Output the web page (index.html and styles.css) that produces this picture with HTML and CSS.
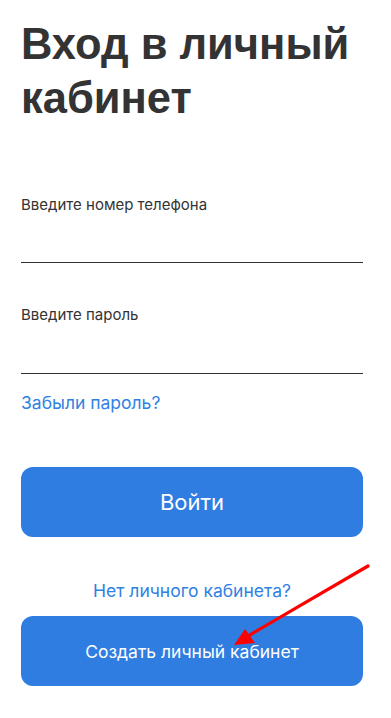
FILE: index.html
```html
<!DOCTYPE html>
<html lang="ru">
<head>
<meta charset="utf-8">
<title>Вход в личный кабинет</title>
<link rel="stylesheet" href="styles.css">
</head>
<body>
<main class="page">
  <h1 class="title">Вход в личный кабинет</h1>
  <form class="form">
    <label class="field field-phone">
      <span class="field-label">Введите номер телефона</span>
      <input class="field-input" type="tel">
    </label>
    <label class="field field-pass">
      <span class="field-label">Введите пароль</span>
      <input class="field-input" type="password">
    </label>
    <a class="link forgot" href="#">Забыли пароль?</a>
    <button class="btn btn-login" type="button">Войти</button>
    <p class="no-account"><a class="link" href="#">Нет личного кабинета?</a></p>
    <button class="btn btn-create" type="button">Создать личный кабинет</button>
  </form>
  <svg class="arrow" width="391" height="718" viewBox="0 0 391 718" aria-hidden="true">
    <line x1="368" y1="549" x2="248" y2="619" stroke="#f00" stroke-width="3.2" stroke-linecap="round"/>
    <polygon points="234,628 245,612 255,626" fill="#f00"/>
  </svg>
</main>
</body>
</html>
```

FILE: styles.css
```css
html, body {
  margin: 0;
  padding: 0;
  background: #fff;
}

body {
  font-family: Inter, "Liberation Sans", Arial, sans-serif;
  color: #333;
}

.page {
  position: relative;
  width: 342px;
  margin-left: 21px;
  height: 718px;
}

.title {
  margin: 17px 0 0;
  font-family: "Liberation Sans", Arial, sans-serif;
  font-size: 43.5px;
  line-height: 54px;
  font-weight: 700;
  color: #333;
}

.form {
  display: flex;
  flex-direction: column;
  margin-top: 70px;
}

.field {
  display: flex;
  flex-direction: column;
}

.field-pass {
  margin-top: 42px;
}

.field-label {
  font-size: 15px;
  line-height: 20px;
  color: #333;
}

.field-input {
  height: 47px;
  border: none;
  border-bottom: 1px solid #333;
  padding: 0;
  margin: 0;
  outline: none;
  background: transparent;
  font: inherit;
}

.field-pass .field-input {
  height: 48px;
}

.link {
  color: #3081e4;
  text-decoration: none;
  font-size: 17.5px;
  line-height: 20px;
}

.forgot {
  margin-top: 19px;
  align-self: flex-start;
}

.btn {
  height: 70px;
  border: none;
  border-radius: 12px;
  background: #2f7de1;
  color: #fff;
  font-family: Inter, "Liberation Sans", Arial, sans-serif;
  cursor: pointer;
}

.btn-login {
  margin-top: 54px;
  font-size: 22px;
}

.no-account {
  margin: 44px 0 0;
  text-align: center;
  line-height: 20px;
}

.btn-create {
  margin-top: 15px;
  font-size: 17.5px;
}

.arrow {
  position: absolute;
  left: -21px;
  top: 0;
  pointer-events: none;
}
```
